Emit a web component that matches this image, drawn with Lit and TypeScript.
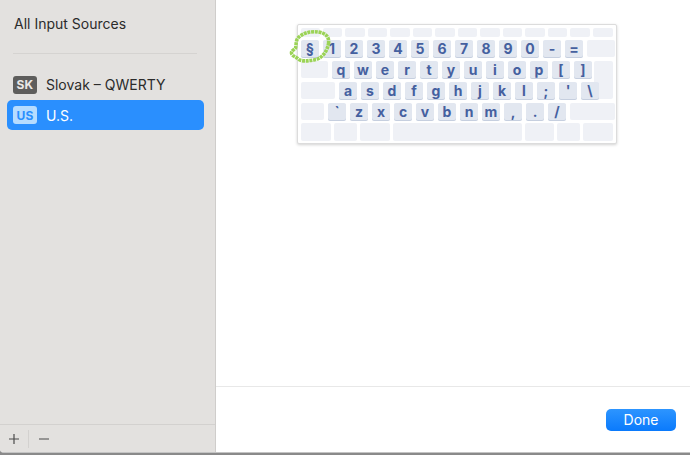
import { LitElement, html, css } from "lit";
import { customElement } from "lit/decorators.js";

type K = [string, number];
const fnRow: number[] = [19, 19, 20, 19, 20, 19, 20, 19, 20, 19, 20, 19, 20, 20];
const rows: { h: number; gap: number; keys: K[] }[] = [
  { h: 17, gap: 4, keys: [["§", 18], ["1", 18], ["2", 18], ["3", 18], ["4", 18], ["5", 18], ["6", 18], ["7", 18], ["8", 18], ["9", 18], ["0", 18], ["-", 18], ["=", 18], ["", 28]] },
  { h: 17, gap: 4, keys: [["", 27], ["q", 18], ["w", 18], ["e", 18], ["r", 18], ["t", 18], ["y", 18], ["u", 18], ["i", 18], ["o", 18], ["p", 18], ["[", 18], ["]", 18]] },
  { h: 17, gap: 4, keys: [["", 34], ["a", 18], ["s", 18], ["d", 18], ["f", 18], ["g", 18], ["h", 18], ["j", 18], ["k", 18], ["l", 18], [";", 18], ["'", 18], ["\\", 18]] },
  { h: 17, gap: 4, keys: [["", 23], ["`", 18], ["z", 18], ["x", 18], ["c", 18], ["v", 18], ["b", 18], ["n", 18], ["m", 18], [",", 18], [".", 18], ["/", 18], ["", 45]] },
  { h: 18, gap: 3, keys: [["", 30], ["", 23], ["", 30], ["", 129], ["", 29], ["", 23], ["", 30]] },
];

@customElement("app-root")
export class AppRoot extends LitElement {
  static styles = css`
    :host { display: block; width: 690px; height: 455px; overflow: hidden; font-family: Inter, "Liberation Sans", sans-serif; background: #8a8a8a; }
    .win { display: flex; width: 690px; height: 453px; background: #fff; border-bottom: 1px solid #c4c4c4; border-bottom-left-radius: 4px; overflow: hidden; box-sizing: border-box; }
    .side { width: 216px; flex: none; box-sizing: border-box; background: #e3e1df; border-right: 1px solid #cfcdcb; display: flex; flex-direction: column; }
    .title { font-size: 14px; line-height: 18px; color: #2b2b2b; padding: 15px 0 0 14px; height: 38px; box-sizing: border-box; flex: none; }
    .rule { height: 1px; background: #d5d3d1; margin: 15px 18px 0 13px; flex: none; }
    .list { margin-top: 20px; display: flex; flex-direction: column; flex: 1; }
    .row { display: flex; align-items: center; height: 21px; padding-left: 13px; gap: 9px; font-size: 14px; color: #2b2b2b; }
    .row.sel { height: 30px; margin: 5px 11px 0 7px; padding-left: 6px; background: #2a8ffe; border-radius: 5px; color: #fff; }
    .badge { width: 24px; height: 18px; border-radius: 3px; font-size: 12px; font-weight: 700; display: flex; align-items: center; justify-content: center; background: #5e5d5c; color: #e9e8e7; letter-spacing: 0.2px; }
    .sel .badge { background: #b6dcff; color: #2a8ffe; }
    .tools { flex: none; height: 28px; border-top: 1px solid #d3d1cf; display: flex; align-items: center; padding-left: 8px; box-sizing: border-box; }
    .tool { width: 12px; height: 12px; display: block; }
    .vsep { width: 1px; height: 18px; background: #d3d1cf; margin: 0 9px 0 8px; }
    .main { flex: 1; display: flex; flex-direction: column; min-width: 0; }
    .top { flex: 1; padding: 24px 0 0 81px; }
    .kbwrap { position: relative; width: 320px; }
    .kb { width: 320px; height: 120px; box-sizing: border-box; background: #fff; border: 1px solid #dcdcdc; border-radius: 2px; box-shadow: 0 1px 3px rgba(0,0,0,.18); padding: 3px 3px 0; display: flex; flex-direction: column; gap: 3px; }
    .fn { display: flex; gap: 3px; height: 9px; }
    .fn span { background: #eff1f6; border-radius: 2px; height: 9px; display: block; }
    .krow { display: flex; position: relative; margin-bottom: 1px; }
    .key { background: #e2e7f0; border-radius: 2px; box-shadow: 0 1px 0 #c6cfdf; color: #45609f; font-size: 14px; font-weight: 700; display: flex; align-items: center; justify-content: center; flex: none; }
    .key.blank { background: #eff1f6; box-shadow: none; }
    .ret { position: absolute; top: 0; right: 0; width: 19px; height: 38px; background: #eff1f6; border-radius: 2px; }
    .ring { position: absolute; left: -9px; top: 4px; width: 44px; height: 36px; }
    .foot { flex: none; height: 66px; border-top: 1px solid #e8e8e8; display: flex; justify-content: flex-end; align-items: flex-start; padding: 22px 14px 0 0; box-sizing: border-box; }
    .done { width: 70px; height: 22px; border: 0; border-radius: 5px; background: linear-gradient(#2d95ff, #0a7afc); color: #fff; font: 400 14px Inter, "Liberation Sans", sans-serif; padding: 0 0 2px; }
  `;

  render() {
    return html`
      <div class="win">
        <aside class="side">
          <div class="title">All Input Sources</div>
          <div class="rule"></div>
          <div class="list">
            <div class="row"><span class="badge">SK</span>Slovak – QWERTY</div>
            <div class="row sel"><span class="badge">US</span>U.S.</div>
          </div>
          <div class="tools">
            <svg class="tool" viewBox="0 0 12 12"><path d="M6 1v10M1 6h10" stroke="#4a4a4a" stroke-width="1.2" fill="none"/></svg>
            <span class="vsep"></span>
            <svg class="tool" viewBox="0 0 12 12"><path d="M1 6h10" stroke="#4a4a4a" stroke-width="1.2" fill="none"/></svg>
          </div>
        </aside>
        <main class="main">
          <div class="top">
            <div class="kbwrap">
              <div class="kb">
                <div class="fn">${fnRow.map((w) => html`<span style="width:${w}px"></span>`)}</div>
                ${rows.map((r, i) => html`<div class="krow" style="height:${r.h}px;gap:${r.gap}px;margin-bottom:${i === 3 ? 0 : 1}px">
                  ${r.keys.map(([t, w]) => html`<div class="key ${t ? "" : "blank"}" style="width:${w}px">${t}</div>`)}
                  ${i === 1 ? html`<div class="ret"></div>` : ""}
                </div>`)}
              </div>
              <svg class="ring" viewBox="288 28 44 36">
                <path d="M328.500 44C329.500 37 326 33 318 32C311 31 302.500 33 298 38C295.500 41 296.500 45 295.500 48C294.500 50 291.500 50 291.500 53C292 56.500 296 56.500 299 59.500C303 62 310 60.500 316.500 59.500C323 57 327 51 328.500 44Z" fill="none" stroke="#9bd356" stroke-width="3.6" stroke-dasharray="3 0.700" stroke-linecap="butt"/>
              </svg>
            </div>
          </div>
          <div class="foot"><button class="done">Done</button></div>
        </main>
      </div>
    `;
  }
}
